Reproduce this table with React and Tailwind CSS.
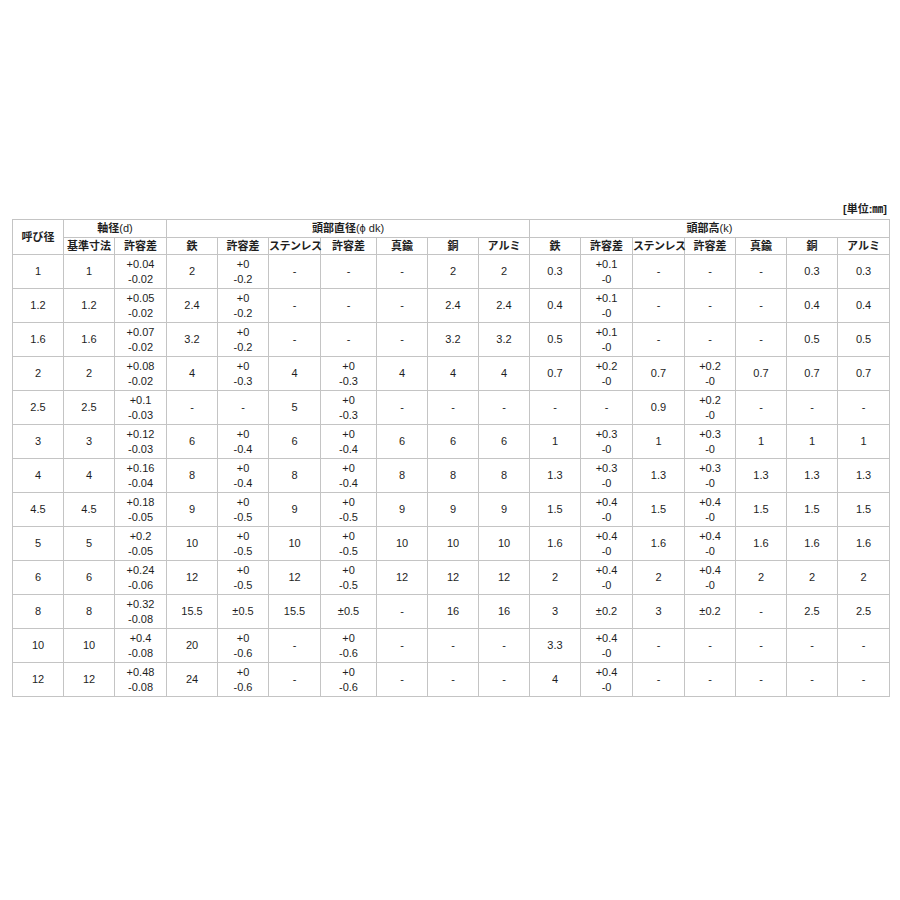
const widths = [51, 51, 52, 51, 51, 52, 56, 51, 51, 51, 51, 52, 52, 51, 51, 51, 52];

const rows = [
  ['1', '1', '+0.04/-0.02', '2', '+0/-0.2', '-', '-', '-', '2', '2', '0.3', '+0.1/-0', '-', '-', '-', '0.3', '0.3'],
  ['1.2', '1.2', '+0.05/-0.02', '2.4', '+0/-0.2', '-', '-', '-', '2.4', '2.4', '0.4', '+0.1/-0', '-', '-', '-', '0.4', '0.4'],
  ['1.6', '1.6', '+0.07/-0.02', '3.2', '+0/-0.2', '-', '-', '-', '3.2', '3.2', '0.5', '+0.1/-0', '-', '-', '-', '0.5', '0.5'],
  ['2', '2', '+0.08/-0.02', '4', '+0/-0.3', '4', '+0/-0.3', '4', '4', '4', '0.7', '+0.2/-0', '0.7', '+0.2/-0', '0.7', '0.7', '0.7'],
  ['2.5', '2.5', '+0.1/-0.03', '-', '-', '5', '+0/-0.3', '-', '-', '-', '-', '-', '0.9', '+0.2/-0', '-', '-', '-'],
  ['3', '3', '+0.12/-0.03', '6', '+0/-0.4', '6', '+0/-0.4', '6', '6', '6', '1', '+0.3/-0', '1', '+0.3/-0', '1', '1', '1'],
  ['4', '4', '+0.16/-0.04', '8', '+0/-0.4', '8', '+0/-0.4', '8', '8', '8', '1.3', '+0.3/-0', '1.3', '+0.3/-0', '1.3', '1.3', '1.3'],
  ['4.5', '4.5', '+0.18/-0.05', '9', '+0/-0.5', '9', '+0/-0.5', '9', '9', '9', '1.5', '+0.4/-0', '1.5', '+0.4/-0', '1.5', '1.5', '1.5'],
  ['5', '5', '+0.2/-0.05', '10', '+0/-0.5', '10', '+0/-0.5', '10', '10', '10', '1.6', '+0.4/-0', '1.6', '+0.4/-0', '1.6', '1.6', '1.6'],
  ['6', '6', '+0.24/-0.06', '12', '+0/-0.5', '12', '+0/-0.5', '12', '12', '12', '2', '+0.4/-0', '2', '+0.4/-0', '2', '2', '2'],
  ['8', '8', '+0.32/-0.08', '15.5', '±0.5', '15.5', '±0.5', '-', '16', '16', '3', '±0.2', '3', '±0.2', '-', '2.5', '2.5'],
  ['10', '10', '+0.4/-0.08', '20', '+0/-0.6', '-', '+0/-0.6', '-', '-', '-', '3.3', '+0.4/-0', '-', '-', '-', '-', '-'],
  ['12', '12', '+0.48/-0.08', '24', '+0/-0.6', '-', '+0/-0.6', '-', '-', '-', '4', '+0.4/-0', '-', '-', '-', '-', '-'],
];

const subHeads = ['基準寸法', '許容差', '鉄', '許容差', 'ステンレス', '許容差', '真鍮', '銅', 'アルミ', '鉄', '許容差', 'ステンレス', '許容差', '真鍮', '銅', 'アルミ'];

function Cell({ value }) {
  const lines = value.split('/');
  return (
    <td className="border border-[#c4c4c4] h-[34px] p-0 text-center align-middle leading-[15px]">
      {lines.map((l, i) => (
        <div key={i}>{l}</div>
      ))}
    </td>
  );
}

export default function App() {
  return (
    <div
      className="w-[900px] h-[900px] bg-white pt-[202px] px-[12px] text-[#1e1e1e]"
      style={{ fontFamily: '"Liberation Sans", "Noto Sans CJK JP", sans-serif' }}
    >
      <div className="flex justify-end pr-[1px] mb-[3px] text-[11px] leading-[14px] font-bold">[単位:㎜]</div>
      <table className="table-fixed border-collapse border border-[#9a9a9a] text-[11px] w-[876px]">
        <colgroup>
          {widths.map((w, i) => (
            <col key={i} style={{ width: w }} />
          ))}
        </colgroup>
        <thead>
          <tr>
            <th rowSpan={2} className="border border-[#c4c4c4] p-0 text-center align-middle font-bold">呼び径</th>
            <th colSpan={2} className="border border-[#c4c4c4] h-[17px] p-0 text-center font-bold">
              軸径<span className="font-normal">(d)</span>
            </th>
            <th colSpan={7} className="border border-[#c4c4c4] h-[17px] p-0 text-center font-bold">
              頭部直径<span className="font-normal">(ϕ dk)</span>
            </th>
            <th colSpan={7} className="border border-[#c4c4c4] h-[17px] p-0 text-center font-bold">
              頭部高<span className="font-normal">(k)</span>
            </th>
          </tr>
          <tr>
            {subHeads.map((h, i) => (
              <th
                key={i}
                className={`border border-[#c4c4c4] h-[17px] p-0 text-center font-bold whitespace-nowrap ${h === 'ステンレス' ? 'tracking-[-0.5px]' : ''}`}
              >
                {h}
              </th>
            ))}
          </tr>
        </thead>
        <tbody>
          {rows.map((r, i) => (
            <tr key={i}>
              {r.map((v, j) => (
                <Cell key={j} value={v} />
              ))}
            </tr>
          ))}
        </tbody>
      </table>
    </div>
  );
}
